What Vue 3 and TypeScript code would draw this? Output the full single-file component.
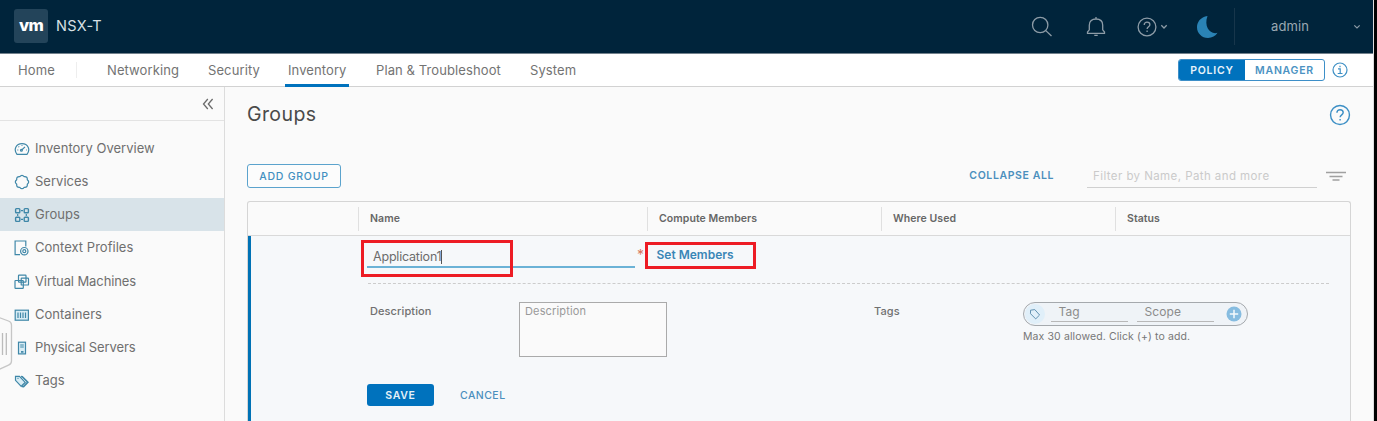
<script setup lang="ts">
interface SideItem {
  label: string
  icon: string
  active?: boolean
}

const tabs: string[] = ['Networking', 'Security', 'Inventory', 'Plan & Troubleshoot', 'System']

const sideItems: SideItem[] = [
  { label: 'Inventory Overview', icon: 'gauge' },
  { label: 'Services', icon: 'gear' },
  { label: 'Groups', icon: 'groups', active: true },
  { label: 'Context Profiles', icon: 'context' },
  { label: 'Virtual Machines', icon: 'vm' },
  { label: 'Containers', icon: 'container' },
  { label: 'Physical Servers', icon: 'server' },
  { label: 'Tags', icon: 'tags' },
]
const columns: string[] = ['', 'Name', 'Compute Members', 'Where Used', 'Status']
</script>

<template>
  <div class="app">
    <header class="topbar">
      <div class="logo">vm</div>
      <span class="product">NSX-T</span>
      <div class="tools">
        <svg class="t-search" width="22" height="22" viewBox="0 0 22 22"><circle cx="9.2" cy="9" r="7.7" /><path d="M14.8 14.6L20.5 20" /></svg>
        <svg class="t-bell" width="20" height="22" viewBox="0 0 20 22"><path d="M1.500 17.300V16l1.800-2.200V9.200C3.300 5.200 6 3 10 3s6.700 2.200 6.700 6.200v4.600l1.800 2.200v1.300zM10 3V.9M8.300 19.400h3.400" /></svg>
        <svg class="t-help" width="20" height="20" viewBox="0 0 20 20"><circle cx="10" cy="10" r="8.900" /><path d="M7.200 7.900C7.200 6.200 8.400 5.200 10 5.200s2.900 1 2.900 2.600c0 2-2.800 2.100-2.800 4.300M10.100 13.600v1.500" /></svg>
        <svg class="t-car" width="8" height="6" viewBox="0 0 8 6"><path d="M1.300 1.300L4 4l2.700-2.700" /></svg>
        <svg class="t-moon" width="22" height="24" viewBox="0 0 22 24"><path d="M11.500 1C4.500 2.200 1 7 1 12.200 1 18 5.800 23 12 23c4 0 7.600-2 9.500-5.200C14.500 20 7.500 12 11.500 1z" /></svg>
      </div>
      <div class="user"><span>admin</span><svg width="8" height="6" viewBox="0 0 8 6"><path d="M1.300 1.300L4 4l2.700-2.700" /></svg></div>
    </header>

    <nav class="nav">
      <a class="tab home">Home</a>
      <a v-for="(t, i) in tabs" :key="t" class="tab" :class="['tab' + i, { on: t === 'Inventory' }]"><span>{{ t }}</span></a>
      <div class="mode">
        <div class="switch"><b class="policy">POLICY</b><b class="manager">MANAGER</b></div>
        <svg class="info" width="16" height="16" viewBox="0 0 16 16"><circle cx="8" cy="8" r="7" /><path d="M6 6.900h2.200v4.500M5.700 11.500h4.800M8 3.800v1.500" /></svg>
      </div>
    </nav>

    <div class="body">
      <aside class="side">
        <div class="collapse"><svg width="12" height="12" viewBox="0 0 12 12"><path d="M5.800 1L1.500 6l4.300 5M10.600 1L6.300 6l4.300 5" /></svg></div>
        <ul>
          <li v-for="s in sideItems" :key="s.label" :class="['i-' + s.icon, { active: s.active }]">
            <svg class="sicon" width="16" height="16" viewBox="0 0 16 16">
              <template v-if="s.icon === 'gauge'"><path d="M3 13.300C-.8 8.500 2 2.700 8 2.700s8.800 5.800 5 10.600zM7.700 9L11 5.900M3.300 9h1M8 4v.8M12 9h.8M4.500 5.500l.6.6" /><circle cx="7.400" cy="9.300" r=".9" /></template>
              <path v-else-if="s.icon === 'gear'" stroke-linejoin="round" d="M5.800 2.700Q8-.1 10.200 2.700Q13.700 2.300 13.300 5.800Q16.100 8 13.300 10.200Q13.700 13.700 10.200 13.300Q8 16.100 5.800 13.300Q2.300 13.700 2.700 10.200Q-.1 8 2.700 5.800Q2.300 2.300 5.800 2.700z" />
              <template v-else-if="s.icon === 'groups'"><g class="mid"><rect x="1.600" y="1.600" width="4.200" height="4.200" rx=".8" /><rect x="10.200" y="1.600" width="4.200" height="4.200" rx=".8" /><rect x="1.600" y="10.200" width="4.200" height="4.200" rx=".8" /><rect x="10.200" y="10.200" width="4.200" height="4.200" rx=".8" /></g><path d="M3.700 7v2M12.300 7v2M7 3.700h2M7 12.300h2" /></template>
              <template v-else-if="s.icon === 'context'"><path d="M6 14.700H1.100V1h10.700v5.500" /><circle cx="10.300" cy="11.200" r="3.700" /><circle cx="10.300" cy="11.200" r="1.500" /></template>
              <template v-else-if="s.icon === 'vm'"><rect x="4.500" y="1.200" width="7.500" height="7" rx=".6" /><rect x="7.200" y="4.200" width="7.300" height="6.800" rx=".6" /><rect x="1" y="6.500" width="8.300" height="7.800" rx=".6" /></template>
              <template v-else-if="s.icon === 'container'"><rect class="tint" x="1.200" y="3.200" width="13.200" height="10" /><path d="M4 5.500v5.500M6.500 5.500v5.500M9 5.500v5.500M11.500 5.500v5.500" /></template>
              <template v-else-if="s.icon === 'server'"><rect class="tint" x="4.500" y="2.200" width="7" height="11.700" /><path d="M6.200 5h3.600M6.200 7h3.600" /><path class="bold" d="M7 11.900h2.500" /></template>
              <template v-else><path class="tint" d="M1.500 3.300v4l5.700 6 4-3.900-5.700-6z" /><path class="bold" d="M7 3.500l1.300.2 5.500 5.500-4.200 4.300-1.600-.2" /><path d="M3.500 5.300h1" /></template>
            </svg>
            <span>{{ s.label }}</span>
          </li>
        </ul>
        <div class="handle"><svg width="13" height="56" viewBox="0 0 13 56"><path class="shape" d="M-1 1.500L8.500 5q3 1.200 3 4v36q0 3-3 4.200L-1 53.500z" /><path d="M2.500 17v22M6.300 17v22" /></svg></div>
      </aside>

      <main class="main">
        <div class="title">
          <h1>Groups</h1>
          <svg width="22" height="22" viewBox="0 0 20 20"><circle cx="10" cy="10" r="8.600" /><path d="M7.200 7.900C7.200 6.200 8.400 5.200 10 5.200s2.900 1 2.900 2.600c0 2-2.800 2.100-2.800 4.300M10.100 13.600v1.500" /></svg>
        </div>

        <div class="actions">
          <button class="add">ADD GROUP</button>
          <a class="collapse-all">COLLAPSE ALL</a>
          <div class="filter">Filter by Name, Path and more</div>
          <svg width="20" height="11" viewBox="0 0 20 11"><path d="M0 1.500h20M3.500 5.500h13M6.500 9h7" /></svg>
        </div>

        <section class="grid">
          <div class="head"><div v-for="c in columns" :key="c"><span>{{ c }}</span></div></div>
          <div class="row">
            <div class="line1">
              <div class="name"><span>Application1</span><i class="caret"></i></div>
              <span class="star">*</span>
              <a class="set">Set Members</a>
              <div class="mark mark-name"></div>
              <div class="mark mark-set"></div>
            </div>
            <div class="line2">
              <label class="l-desc">Description</label>
              <div class="area"><span>Description</span></div>
              <label class="l-tags">Tags</label>
              <div class="tagbox">
                <div class="pill">
                  <div class="halo"><svg width="12" height="12" viewBox="0 0 12 12"><path d="M1.500 2.200v3.500l5.200 5.200 3.900-3.900L5.800 1.600z" /></svg></div>
                  <span class="pf"><em>Tag</em></span><span class="pf"><em>Scope</em></span>
                  <svg class="plus" width="16" height="16" viewBox="0 0 16 16"><circle cx="8" cy="8" r="7.500" /><path d="M8 3.800v8.400M3.800 8h8.400" /></svg>
                </div>
                <p>Max 30 allowed. Click (+) to add.</p>
              </div>
            </div>
            <div class="line3"><button class="save">SAVE</button><a class="cancel">CANCEL</a></div>
          </div>
        </section>
      </main>
    </div>
  </div>
</template>

<style>
body { background: #000; overflow: hidden; }
</style>

<style scoped>
* { box-sizing: border-box; }
.app { width: 1374px; height: 421px; overflow: hidden; background: #fafafa; font-family: Inter, "Open Sans", sans-serif; font-size: 13px; color: #6a6a6a; border-right: 1px solid #ddd; white-space: nowrap; }
svg { fill: none; flex: none; display: block; }
.topbar { height: 54px; background: #00243b; border-bottom: 1px solid #72818c; display: flex; align-items: center; padding-left: 14px; }
.logo { width: 34px; height: 34px; margin-top: -1px; border-radius: 3px; background: #23445a; color: #fff; font: 800 16.500px/32px Inter, sans-serif; letter-spacing: -.7px; text-align: center; }
.product { margin: -2px 0 0 8px; font-size: 14.500px; color: #d8e0e5; letter-spacing: .3px; }
.tools { margin-left: auto; display: flex; align-items: center; stroke: #8d9ca7; stroke-width: 1.300; height: 53px; padding-right: 16px; }
.t-bell { margin-left: 33px; }
.t-help { margin-left: 31px; }
.t-car { margin-left: 3px; }
.t-moon { margin-left: 28px; fill: #2a83b5; stroke: none; }
.user { border-left: 1px solid #17364b; height: 37px; width: 139px; display: flex; align-items: center; justify-content: space-between; padding: 0 12px 0 36px; color: #9aa8b2; letter-spacing: .1px; }
.user span { margin-top: -2px; }
.user svg { stroke: #8d9ca7; stroke-width: 1.200; }

.nav { height: 33px; background: #fff; border-bottom: 1px solid #d2d2d2; display: flex; align-items: center; padding-left: 18px; }
.tab { height: 33px; line-height: 33px; color: #737373; letter-spacing: .1px; flex: none; }
.home { width: 59px; height: 16px; line-height: 17px; border-right: 1px solid #eee; }
.tab0 { width: 101px; margin-left: 30px; }
.tab1 { width: 77px; }
.tab2 { width: 64px; border-bottom: 3px solid #0072bd; padding-left: 3px; }
.tab3 { width: 154px; margin-left: 27px; }
.mode { margin-left: auto; display: flex; align-items: center; padding-right: 25px; }
.switch { display: flex; width: 147px; height: 22px; border: 1px solid #3d8fc8; border-radius: 3px; overflow: hidden; font-size: 10.500px; line-height: 21px; text-align: center; letter-spacing: .75px; }
.switch b { font-weight: 600; }
.policy { width: 66px; background: #0072bd; color: #e8f3fa; }
.manager { flex: 1; color: #4b92c2; }
.info { margin-left: 7px; stroke: #3d8fc4; stroke-width: 1.200; }

.body { display: flex; height: 334px; }
.side { width: 225px; border-right: 1px solid #dcdcdc; position: relative; }
.collapse { height: 34px; border-bottom: 1px solid #e3e3e3; padding: 11px 10px 0; display: flex; justify-content: flex-end; stroke: #6b6b6b; stroke-width: 1.300; }
ul { list-style: none; margin: 11px 0 0; padding: 0; }
li { height: 33.140px; display: flex; align-items: center; padding-left: 14px; color: #6f6f6f; letter-spacing: .02px; }
li span { margin-left: 5px; margin-top: -1px; }
li.active { background: #d8e3e9; }
.i-vm, .i-server { letter-spacing: -.1px; }
.sicon { stroke: #3f87a8; stroke-width: 1.200; margin-top: 1px; }
.tint { fill: #d9edf5; }
.mid { stroke-width: 1.400; }
.bold { stroke-width: 1.700; }
.handle { position: absolute; left: 0; top: 229px; stroke: #bbb; stroke-width: 1.300; }
.shape { fill: #fafafa; stroke: #c6c6c6; }

.main { flex: 1; padding-left: 22px; }
.title { display: flex; justify-content: space-between; align-items: center; height: 56px; padding-right: 22px; stroke: #3c8fc5; stroke-width: 1.300; }
h1 { margin: -2px 0 0; font-size: 19.500px; font-weight: 400; color: #4a4a4a; letter-spacing: .4px; }
.actions { display: flex; align-items: center; height: 24px; margin-top: 21px; padding-right: 27px; }
button { font-family: inherit; padding: 0; }
.add { width: 94px; height: 24px; border: 1px solid #5ba3cd; border-radius: 3px; background: #fcfcfc; color: #428fc0; font-size: 10.500px; font-weight: 500; letter-spacing: .75px; }
.collapse-all { margin: -1px 0 0 auto; font-size: 10.500px; font-weight: 600; letter-spacing: .6px; color: #4b8fbd; }
.filter { width: 230px; height: 24px; margin-left: 33px; padding-left: 6px; border-bottom: 1px solid #d0d0d0; font-size: 11.500px; line-height: 25px; letter-spacing: .42px; color: #cacaca; }
.actions svg { margin-left: 9px; stroke: #a0a0a0; stroke-width: 1.300; }

.grid { margin-top: 13px; width: 1104px; height: 225px; border: 1px solid #d5d5d5; border-bottom: 0; border-radius: 3px 3px 0 0; background: #fafafa; }
.head { height: 34px; display: grid; grid-template-columns: 110px 289px 234px 234px 1fr; align-items: center; border-bottom: 1px solid #d9d9d9; font-size: 10.500px; font-weight: 600; letter-spacing: .07px; color: #666; }
.head div { height: 24px; line-height: 23px; border-left: 1px solid #e0e0e0; padding-left: 11px; }
.head div:first-child { border: 0; }
.row { border-left: 3px solid #0072b5; background: #f6f8fa; height: 190px; padding: 0 21px 0 117px; }
.line1 { height: 48px; border-bottom: 1px dashed #ccc; display: flex; position: relative; }
.name { width: 268px; height: 32px; margin-left: -1px; border-bottom: 2px solid #6bb2d6; padding: 12px 0 0 6px; font-size: 12.500px; line-height: 18px; letter-spacing: -.2px; display: flex; color: #6c6c6c; }
.caret { width: 1px; height: 14px; margin-top: 2px; background: #555; }
.star { margin: 10px 0 0 2px; color: #d9735a; font-size: 14px; }
.set { margin: 10px 0 0 12.500px; font-weight: 600; font-size: 12px; line-height: 18px; letter-spacing: 0; color: #3a86b6; }
.mark { position: absolute; border: 3px solid #ed1c24; }
.mark-name { left: -7px; top: 4px; width: 152px; height: 37px; }
.mark-set { left: 277px; top: 6px; width: 111px; height: 27px; }
.line2 { display: flex; padding-top: 18px; height: 100px; }
.line2 label { font-size: 11px; font-weight: 500; line-height: 18px; letter-spacing: .1px; color: #707070; }
.l-desc { width: 151px; padding-left: 2px; }
.area { width: 148px; height: 55px; border: 1px solid #aaa; background: #fafafa; padding: 2px 5px; font-size: 11px; line-height: 13px; letter-spacing: .15px; color: #999; }
.l-tags { width: 356px; padding-left: 207px; }
.pill { width: 225px; height: 24px; border: 1.500px solid #a5a9ad; border-radius: 12px; background: #eff3f7; display: flex; align-items: center; padding-left: 1px; }
.halo { width: 20px; height: 20px; border-radius: 50%; background: #e0eff9; display: grid; place-items: center; stroke: #6292b2; }
.pf { width: 77px; height: 20px; border-bottom: 1px solid #b8b8b8; padding-left: 7.500px; margin: -4px 0 0 6px; font-size: 12px; line-height: 20px; color: #8b8b8b; letter-spacing: .1px; }
.pf + .pf { margin-left: 9px; }
.pf em { font-style: normal; }
.plus { margin-left: 12px; fill: #86bce0; stroke: none; }
.plus path { stroke: #f4f9fc; stroke-width: 1.500; }
.tagbox p { margin: 4px 0 0; font-size: 10.500px; line-height: 14px; letter-spacing: .11px; color: #777; }
.line3 { display: flex; align-items: center; height: 22px; margin-left: -1px; }
.save { width: 67px; height: 22px; border: 0; border-radius: 3px; background: #0072bd; color: #e6f1f8; font-size: 10.500px; font-weight: 600; letter-spacing: .7px; }
.cancel { margin-left: 26px; color: #4b8fbd; font-size: 10.500px; font-weight: 500; letter-spacing: .45px; }
</style>
